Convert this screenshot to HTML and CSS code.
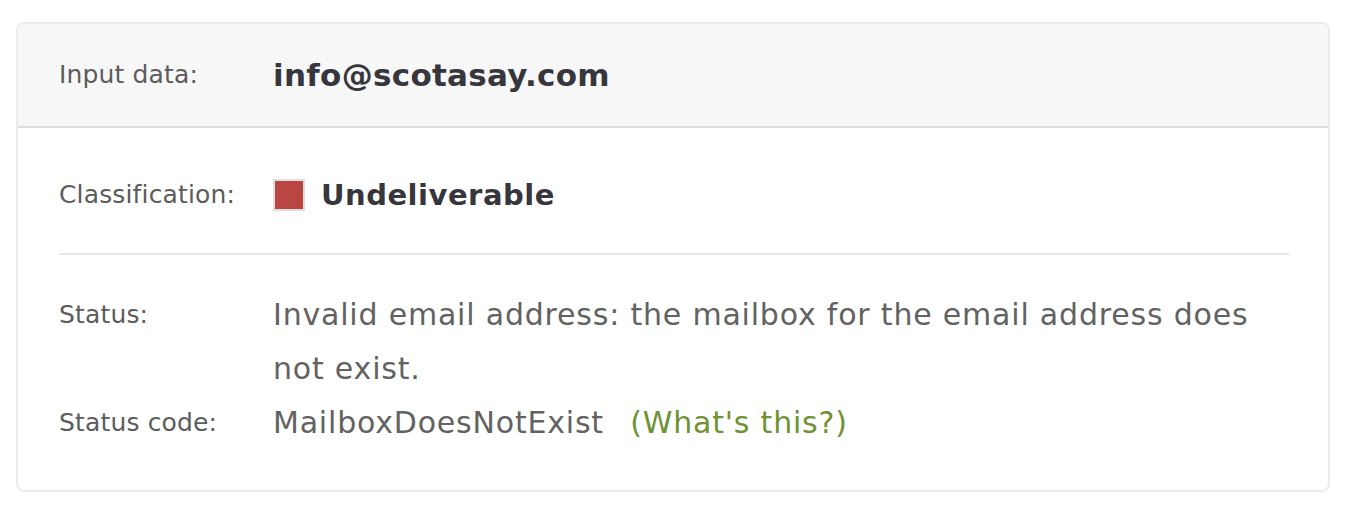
FILE: index.html
```html
<!DOCTYPE html>
<html lang="en">
<head>
    <meta charset="UTF-8">
    <title>Email verification result</title>
    <link rel="stylesheet" href="styles.css">
</head>
<body>
    <div class="result-card">
        <div class="result-head">
            <div class="row">
                <span class="label">Input data:</span>
                <span class="email">info@scotasay.com</span>
            </div>
        </div>
        <div class="result-body">
            <div class="row classification">
                <span class="label">Classification:</span>
                <span class="verdict"><span class="swatch"></span>Undeliverable</span>
            </div>
            <div class="divider"></div>
            <div class="row">
                <span class="label">Status:</span>
                <span class="value">Invalid email address: the mailbox for the email address does not exist.</span>
            </div>
            <div class="row">
                <span class="label">Status code:</span>
                <span class="value">MailboxDoesNotExist <a class="help" href="#">(What's this?)</a></span>
            </div>
        </div>
    </div>
</body>
</html>
```

FILE: styles.css
```css
body {
    margin: 0;
    background-color: #ffffff;
    font-family: "DejaVu Sans", sans-serif;
}
.result-card {
    margin: 22px 24px 0 16px;
    border: 2px solid #ececef;
    border-radius: 8px;
    overflow: hidden;
}
.result-head {
    background-color: #f7f7f7;
    border-bottom: 2px solid #dcdcdc;
    padding: 24px 41px;
}
.result-body {
    padding: 40px 39px 40px 41px;
}
.row {
    display: grid;
    grid-template-columns: 214px 1fr;
    align-items: start;
    line-height: 54px;
}
.label {
    font-size: 25px;
    letter-spacing: 0.15px;
    color: #5c5c5c;
}
.email {
    font-size: 31px;
    font-weight: 700;
    letter-spacing: 0.3px;
    color: #36363c;
}
.classification {
    height: 54px;
    align-items: center;
}
.verdict {
    display: flex;
    align-items: center;
    font-size: 29px;
    font-weight: 700;
    letter-spacing: 0.5px;
    color: #36363c;
}
.swatch {
    width: 28px;
    height: 28px;
    background-color: #b94641;
    border: 2px solid #dedede;
    margin-right: 16px;
}
.divider {
    height: 2px;
    background-color: #e6e6e6;
    margin: 31px 0 33px;
}
.value {
    font-size: 30px;
    letter-spacing: 0.8px;
    color: #626262;
}
.help {
    color: #6f9233;
    text-decoration: none;
    margin-left: 16px;
}
```
